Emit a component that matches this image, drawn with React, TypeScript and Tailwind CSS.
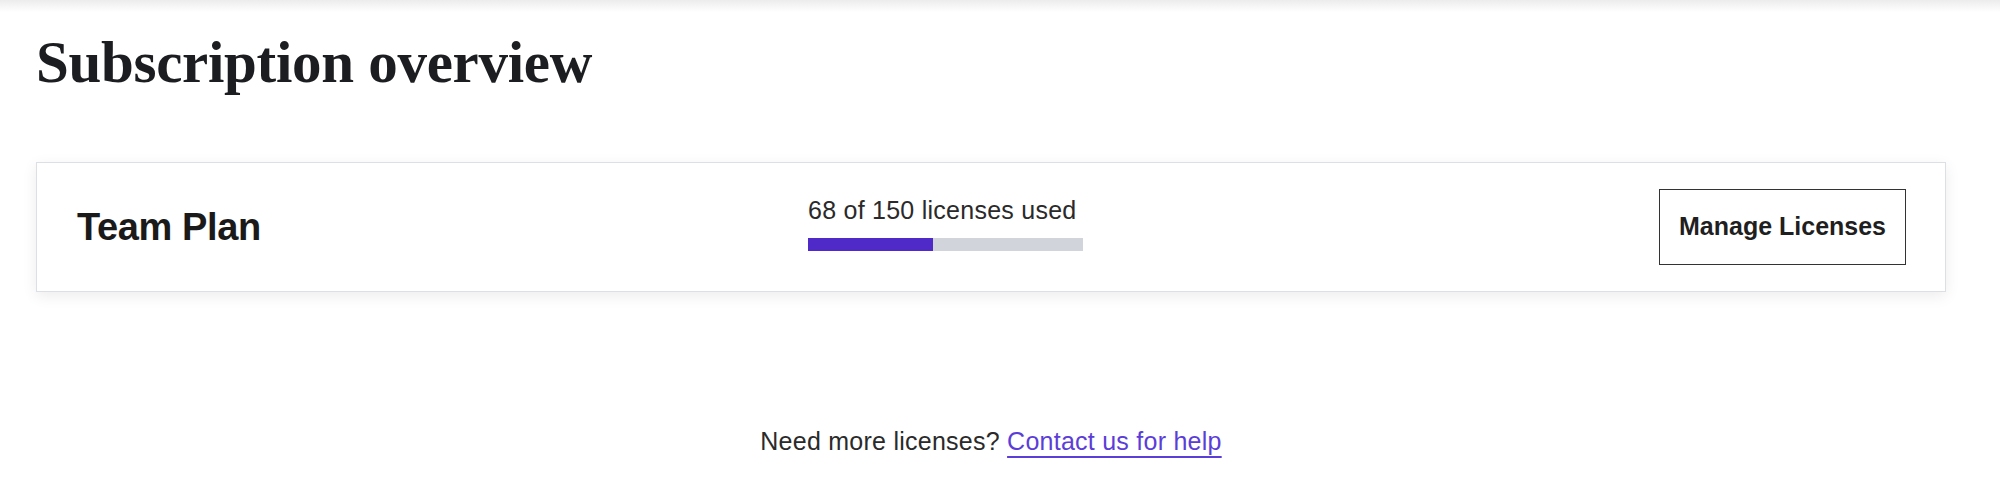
import React from 'react'

const used = 68
const total = 150

export default function App() {
  const pct = (used / total) * 100

  return (
    <div className="min-h-[482px] bg-white text-[#222] font-['Liberation_Sans',Arial,sans-serif]">
      <div className="h-[12px] bg-gradient-to-b from-[#ececec] to-white" />
      <main className="pl-[36px] pr-[54px] pt-[21px]">
        <h1 className="text-[59px] leading-[58px] font-bold text-[#1c1d20] font-['Liberation_Serif','Times_New_Roman',serif] tracking-[-0.005em]">
          Subscription overview
        </h1>

        <section className="mt-[71px] h-[130px] bg-white border border-[#dcdfe3] shadow-[0_4px_14px_rgba(0,0,0,0.08)] flex items-center pl-[40px] pr-[39px]">
          <h2 className="w-[731px] shrink-0 text-[38px] font-bold tracking-[-0.01em] text-[#1a1a1a]">Team Plan</h2>

          <div className="w-[275px] shrink-0 pb-[8px]">
            <p className="text-[25px] leading-[30px] tracking-[0.01em] whitespace-nowrap text-[#2a2a2a]">
              {used} of {total} licenses used
            </p>
            <div className="mt-[13px] h-[13px] bg-[#d1d5db]">
              <div className="h-full bg-[#4f2ac9]" style={{ width: `${pct}%` }} />
            </div>
          </div>

          <div className="flex-1 flex justify-end">
            <button className="w-[247px] h-[76px] border-[1.5px] border-[#333] flex items-center justify-center text-[25px] font-bold text-[#1f1f1f]">
              Manage Licenses
            </button>
          </div>
        </section>

        <p className="mt-[134px] text-center text-[25px] leading-[30px] tracking-[0.01em] text-[#2a2a2a]">
          Need more licenses?{' '}
          <a href="#" className="text-[#5b3dd8] underline decoration-[2px] underline-offset-[6px]">Contact us for help</a>
        </p>
      </main>
    </div>
  )
}
